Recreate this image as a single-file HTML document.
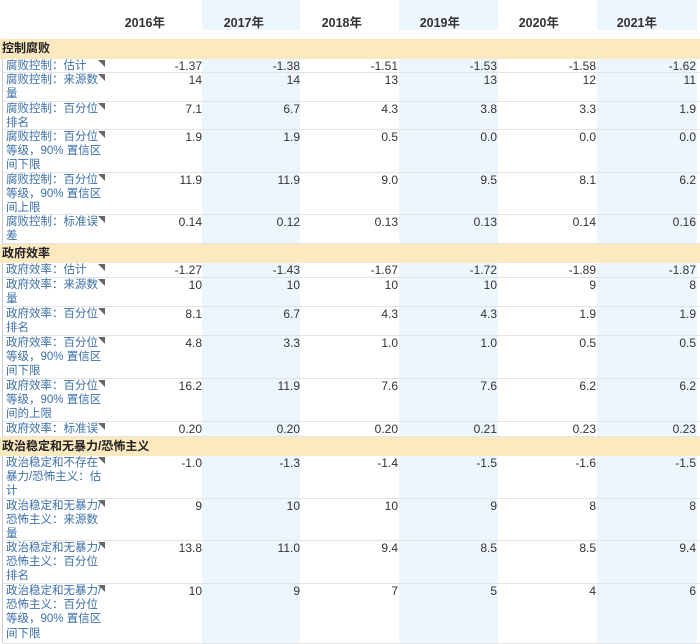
<!DOCTYPE html>
<html><head><meta charset="utf-8"><style>
*{margin:0;padding:0;box-sizing:border-box}
body{width:700px;height:643px;overflow:hidden;background:#fff;position:relative;font-family:"Liberation Sans","Noto Sans CJK SC",sans-serif;font-size:12px;color:#333}
.col{position:absolute;background:#eef6fd}
.hd{position:absolute;top:12px;font-size:12.5px;font-weight:bold;color:#333;text-align:right}
.sec{position:absolute;left:0;width:700px;background:#fde9c0;font-weight:bold;font-size:12px;color:#222;padding-left:2px;line-height:19px}
.row{position:absolute;left:3px;width:697px;border-bottom:1px solid #e4e4e4}
.lb{position:absolute;left:3px;top:0;width:98px;line-height:14.2px;font-size:11.5px;color:#3d6fa8;white-space:nowrap;overflow:hidden}
.tri{position:absolute;left:95px;top:1px;width:0;height:0;border-top:7px solid #666;border-left:7px solid transparent}
.n{position:absolute;top:0;line-height:14.2px;text-align:right;width:90px;color:#333}
</style></head><body>
<div style="position:absolute;left:2px;top:38px;width:1px;height:605px;background:#ccc"></div>
<div class="col" style="left:202px;top:0;width:98px;height:30px"></div>
<div class="col" style="left:399px;top:0;width:99px;height:30px"></div>
<div class="col" style="left:597px;top:0;width:100px;height:30px"></div>
<div class="col" style="left:202px;top:59px;width:98px;height:584px"></div>
<div class="col" style="left:399px;top:59px;width:99px;height:584px"></div>
<div class="col" style="left:597px;top:59px;width:100px;height:584px"></div>
<div class="hd" style="left:75px;width:90px">2016年</div>
<div class="hd" style="left:174px;width:90px">2017年</div>
<div class="hd" style="left:272px;width:90px">2018年</div>
<div class="hd" style="left:370px;width:90px">2019年</div>
<div class="hd" style="left:469px;width:90px">2020年</div>
<div class="hd" style="left:567px;width:90px">2021年</div>
<div id="c"></div>
<script>
var R=[
["s",39,20,"控制腐败"],
["r",59,14,"腐败控制：估计",["-1.37","-1.38","-1.51","-1.53","-1.58","-1.62"]],
["r",73,29,"腐败控制：来源数<br>量",["14","14","13","13","12","11"]],
["r",102,28,"腐败控制：百分位<br>排名",["7.1","6.7","4.3","3.8","3.3","1.9"]],
["r",130,43,"腐败控制：百分位<br>等级，90% 置信区<br>间下限",["1.9","1.9","0.5","0.0","0.0","0.0"]],
["r",173,42,"腐败控制：百分位<br>等级，90% 置信区<br>间上限",["11.9","11.9","9.0","9.5","8.1","6.2"]],
["r",215,29,"腐败控制：标准误<br>差",["0.14","0.12","0.13","0.13","0.14","0.16"]],
["s",244,19,"政府效率"],
["r",263,15,"政府效率：估计",["-1.27","-1.43","-1.67","-1.72","-1.89","-1.87"]],
["r",278,29,"政府效率：来源数<br>量",["10","10","10","10","9","8"]],
["r",307,29,"政府效率：百分位<br>排名",["8.1","6.7","4.3","4.3","1.9","1.9"]],
["r",336,43,"政府效率：百分位<br>等级，90% 置信区<br>间下限",["4.8","3.3","1.0","1.0","0.5","0.5"]],
["r",379,43,"政府效率：百分位<br>等级，90% 置信区<br>间的上限",["16.2","11.9","7.6","7.6","6.2","6.2"]],
["r",422,15,"政府效率：标准误",["0.20","0.20","0.20","0.21","0.23","0.23"]],
["s",437,19,"政治稳定和无暴力/恐怖主义"],
["r",456,43,"政治稳定和不存在<br>暴力/恐怖主义：估<br>计",["-1.0","-1.3","-1.4","-1.5","-1.6","-1.5"]],
["r",499,42,"政治稳定和无暴力/<br>恐怖主义：来源数<br>量",["9","10","10","9","8","8"]],
["r",541,43,"政治稳定和无暴力/<br>恐怖主义：百分位<br>排名",["13.8","11.0","9.4","8.5","8.5","9.4"]],
["r",584,60,"政治稳定和无暴力/<br>恐怖主义：百分位<br>等级，90% 置信区<br>间下限",["10","9","7","5","4","6"]]
];
var X=[202,300,398,497,596,696],h="";
R.forEach(function(r){
if(r[0]=="s"){h+='<div class="sec" style="top:'+r[1]+'px;height:'+r[2]+'px">'+r[3]+'</div>';return;}
h+='<div class="row" style="top:'+r[1]+'px;height:'+r[2]+'px"><div class="lb" style="height:'+(r[2]-1)+'px">'+r[3]+'</div><div class="tri"></div>';
r[4].forEach(function(v,i){h+='<div class="n" style="left:'+(X[i]-3-90)+'px">'+v+'</div>';});
h+='</div>';});
document.getElementById("c").innerHTML=h;
</script>
</body></html>
